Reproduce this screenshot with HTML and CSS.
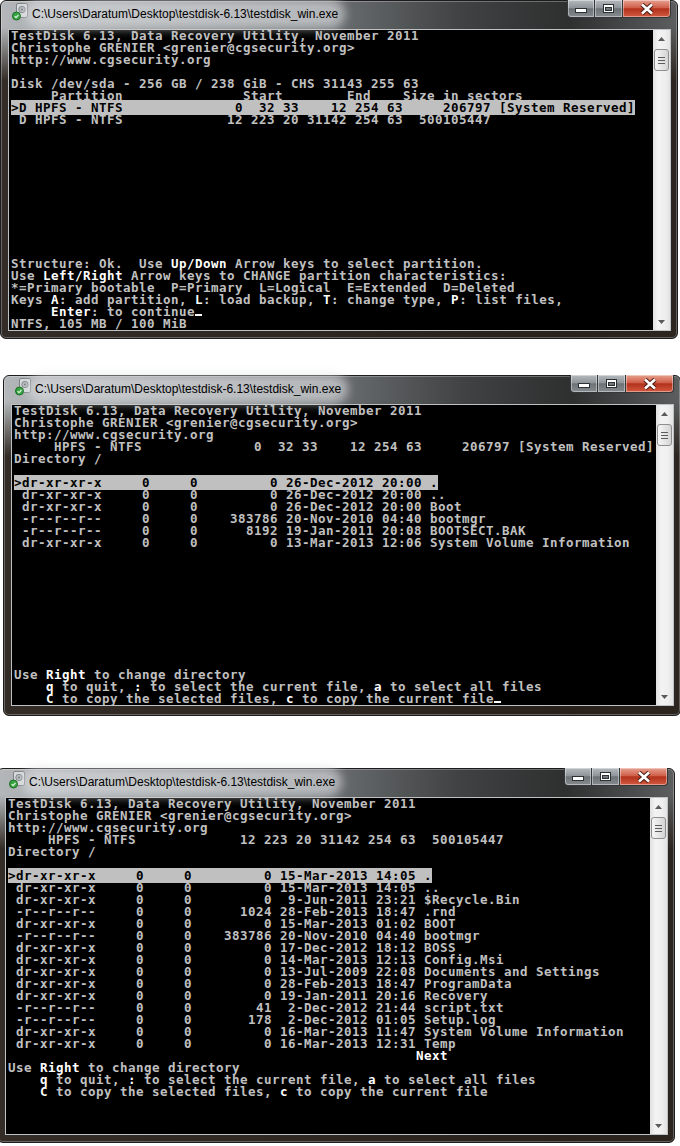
FILE: index.html
```html
<!DOCTYPE html>
<html>
<head>
<title>TestDisk screenshots</title>
<link rel="stylesheet" href="styles.css">
</head>
<body>

<!-- Window 1: partition list -->
<div class="window win-1">
    <div class="titlebar">
        <svg class="app-icon" viewBox="0 0 16 18" width="16" height="18">
            <rect x="4.5" y="0.5" width="11" height="14" rx="1.5" fill="#d6d9db" stroke="#7e8386"/>
            <circle cx="10" cy="6.5" r="3.2" fill="#b5babd" stroke="#80868a"/>
            <circle cx="10" cy="6.5" r="0.9" fill="#6b7073"/>
            <circle cx="4.5" cy="13" r="4" fill="#35a540" stroke="#1b6b25"/>
            <path d="M2.6 13.2 l1.4 1.4 l2.5 -2.7" fill="none" stroke="#e8f5e8" stroke-width="1.2"/>
        </svg>
        <span class="title">C:\Users\Daratum\Desktop\testdisk-6.13\testdisk_win.exe</span>
        <div class="caption">
            <div class="cap cap-min"><svg width="12" height="5"><rect x="0.5" y="0.5" width="11" height="4" fill="#fff" stroke="#2c3134"/></svg></div>
            <div class="cap cap-max"><svg width="11" height="9"><rect x="0.5" y="0.5" width="10" height="8" fill="none" stroke="#2c3134"/><rect x="1.5" y="1.5" width="8" height="6" fill="none" stroke="#fff"/><rect x="2" y="2" width="7" height="1.5" fill="#fff"/><rect x="2.5" y="3.5" width="6" height="3" fill="none" stroke="#2c3134"/></svg></div>
            <div class="cap cap-close"><svg width="16" height="12"><path d="M3 1.5 L13 10.5 M13 1.5 L3 10.5" stroke="#4a1d14" stroke-width="4.6"/><path d="M3 1.5 L13 10.5 M13 1.5 L3 10.5" stroke="#fff" stroke-width="2.6"/></svg></div>
        </div>
    </div>
    <div class="client">
<pre class="console">
TestDisk 6.13, Data Recovery Utility, November 2011
Christophe GRENIER &lt;grenier@cgsecurity.org&gt;
http://www.cgsecurity.org

Disk /dev/sda - 256 GB / 238 GiB - CHS 31143 255 63
     Partition               Start        End    Size in sectors
<span class="sel">&gt;D HPFS - NTFS              0  32 33    12 254 63     206797 [System Reserved]</span>
 D HPFS - NTFS             12 223 20 31142 254 63  500105447











Structure: Ok.  Use <b>Up/Down</b> Arrow keys to select partition.
Use <b>Left/Right</b> Arrow keys to CHANGE partition characteristics:
*=Primary bootable  P=Primary  L=Logical  E=Extended  D=Deleted
Keys <b>A</b>: add partition, <b>L</b>: load backup, <b>T</b>: change type, <b>P</b>: list files,
     <b>Enter</b>: to continue<span class="cursor"></span>
NTFS, 105 MB / 100 MiB</pre>
        <div class="scrollbar">
            <div class="sb-arrow"><svg width="7" height="4"><path d="M3.5 0 L7 4 L0 4 Z" fill="#5a5a5a"/></svg></div>
            <div class="sb-thumb"><i class="grip"></i><i class="grip"></i><i class="grip"></i></div>
            <div class="sb-track"></div>
            <div class="sb-arrow"><svg width="7" height="4"><path d="M0 0 L7 0 L3.5 4 Z" fill="#5a5a5a"/></svg></div>
        </div>
    </div>
</div>

<!-- Window 2: short directory listing -->
<div class="window win-2">
    <div class="titlebar">
        <svg class="app-icon" viewBox="0 0 16 18" width="16" height="18">
            <rect x="4.5" y="0.5" width="11" height="14" rx="1.5" fill="#d6d9db" stroke="#7e8386"/>
            <circle cx="10" cy="6.5" r="3.2" fill="#b5babd" stroke="#80868a"/>
            <circle cx="10" cy="6.5" r="0.9" fill="#6b7073"/>
            <circle cx="4.5" cy="13" r="4" fill="#35a540" stroke="#1b6b25"/>
            <path d="M2.6 13.2 l1.4 1.4 l2.5 -2.7" fill="none" stroke="#e8f5e8" stroke-width="1.2"/>
        </svg>
        <span class="title">C:\Users\Daratum\Desktop\testdisk-6.13\testdisk_win.exe</span>
        <div class="caption">
            <div class="cap cap-min"><svg width="12" height="5"><rect x="0.5" y="0.5" width="11" height="4" fill="#fff" stroke="#2c3134"/></svg></div>
            <div class="cap cap-max"><svg width="11" height="9"><rect x="0.5" y="0.5" width="10" height="8" fill="none" stroke="#2c3134"/><rect x="1.5" y="1.5" width="8" height="6" fill="none" stroke="#fff"/><rect x="2" y="2" width="7" height="1.5" fill="#fff"/><rect x="2.5" y="3.5" width="6" height="3" fill="none" stroke="#2c3134"/></svg></div>
            <div class="cap cap-close"><svg width="16" height="12"><path d="M3 1.5 L13 10.5 M13 1.5 L3 10.5" stroke="#4a1d14" stroke-width="4.6"/><path d="M3 1.5 L13 10.5 M13 1.5 L3 10.5" stroke="#fff" stroke-width="2.6"/></svg></div>
        </div>
    </div>
    <div class="client">
<pre class="console">
TestDisk 6.13, Data Recovery Utility, November 2011
Christophe GRENIER &lt;grenier@cgsecurity.org&gt;
http://www.cgsecurity.org
     HPFS - NTFS              0  32 33    12 254 63     206797 [System Reserved]
Directory /

<span class="sel">&gt;dr-xr-xr-x     0     0         0 26-Dec-2012 20:00 .</span>
 dr-xr-xr-x     0     0         0 26-Dec-2012 20:00 ..
 dr-xr-xr-x     0     0         0 26-Dec-2012 20:00 Boot
 -r--r--r--     0     0    383786 20-Nov-2010 04:40 bootmgr
 -r--r--r--     0     0      8192 19-Jan-2011 20:08 BOOTSECT.BAK
 dr-xr-xr-x     0     0         0 13-Mar-2013 12:06 System Volume Information










Use <b>Right</b> to change directory
    <b>q</b> to quit, <b>:</b> to select the current file, <b>a</b> to select all files
    <b>C</b> to copy the selected files, <b>c</b> to copy the current file<span class="cursor"></span></pre>
        <div class="scrollbar">
            <div class="sb-arrow"><svg width="7" height="4"><path d="M3.5 0 L7 4 L0 4 Z" fill="#5a5a5a"/></svg></div>
            <div class="sb-thumb"><i class="grip"></i><i class="grip"></i><i class="grip"></i></div>
            <div class="sb-track"></div>
            <div class="sb-arrow"><svg width="7" height="4"><path d="M0 0 L7 0 L3.5 4 Z" fill="#5a5a5a"/></svg></div>
        </div>
    </div>
</div>

<!-- Window 3: full directory listing -->
<div class="window win-3">
    <div class="titlebar">
        <svg class="app-icon" viewBox="0 0 16 18" width="16" height="18">
            <rect x="4.5" y="0.5" width="11" height="14" rx="1.5" fill="#d6d9db" stroke="#7e8386"/>
            <circle cx="10" cy="6.5" r="3.2" fill="#b5babd" stroke="#80868a"/>
            <circle cx="10" cy="6.5" r="0.9" fill="#6b7073"/>
            <circle cx="4.5" cy="13" r="4" fill="#35a540" stroke="#1b6b25"/>
            <path d="M2.6 13.2 l1.4 1.4 l2.5 -2.7" fill="none" stroke="#e8f5e8" stroke-width="1.2"/>
        </svg>
        <span class="title">C:\Users\Daratum\Desktop\testdisk-6.13\testdisk_win.exe</span>
        <div class="caption">
            <div class="cap cap-min"><svg width="12" height="5"><rect x="0.5" y="0.5" width="11" height="4" fill="#fff" stroke="#2c3134"/></svg></div>
            <div class="cap cap-max"><svg width="11" height="9"><rect x="0.5" y="0.5" width="10" height="8" fill="none" stroke="#2c3134"/><rect x="1.5" y="1.5" width="8" height="6" fill="none" stroke="#fff"/><rect x="2" y="2" width="7" height="1.5" fill="#fff"/><rect x="2.5" y="3.5" width="6" height="3" fill="none" stroke="#2c3134"/></svg></div>
            <div class="cap cap-close"><svg width="16" height="12"><path d="M3 1.5 L13 10.5 M13 1.5 L3 10.5" stroke="#4a1d14" stroke-width="4.6"/><path d="M3 1.5 L13 10.5 M13 1.5 L3 10.5" stroke="#fff" stroke-width="2.6"/></svg></div>
        </div>
    </div>
    <div class="client">
<pre class="console console-tall">
TestDisk 6.13, Data Recovery Utility, November 2011
Christophe GRENIER &lt;grenier@cgsecurity.org&gt;
http://www.cgsecurity.org
     HPFS - NTFS             12 223 20 31142 254 63  500105447
Directory /

<span class="sel">&gt;dr-xr-xr-x     0     0         0 15-Mar-2013 14:05 .</span>
 dr-xr-xr-x     0     0         0 15-Mar-2013 14:05 ..
 dr-xr-xr-x     0     0         0  9-Jun-2011 23:21 $Recycle.Bin
 -r--r--r--     0     0      1024 28-Feb-2013 18:47 .rnd
 dr-xr-xr-x     0     0         0 15-Mar-2013 01:02 BOOT
 -r--r--r--     0     0    383786 20-Nov-2010 04:40 bootmgr
 dr-xr-xr-x     0     0         0 17-Dec-2012 18:12 BOSS
 dr-xr-xr-x     0     0         0 14-Mar-2013 12:13 Config.Msi
 dr-xr-xr-x     0     0         0 13-Jul-2009 22:08 Documents and Settings
 dr-xr-xr-x     0     0         0 28-Feb-2013 18:47 ProgramData
 dr-xr-xr-x     0     0         0 19-Jan-2011 20:16 Recovery
 -r--r--r--     0     0        41  2-Dec-2012 21:44 script.txt
 -r--r--r--     0     0       178  2-Dec-2012 01:05 Setup.log
 dr-xr-xr-x     0     0         0 16-Mar-2013 11:47 System Volume Information
 dr-xr-xr-x     0     0         0 16-Mar-2013 12:31 Temp
                                                   <b>Next</b>
Use <b>Right</b> to change directory
    <b>q</b> to quit, <b>:</b> to select the current file, <b>a</b> to select all files
    <b>C</b> to copy the selected files, <b>c</b> to copy the current file</pre>
        <div class="scrollbar">
            <div class="sb-arrow"><svg width="7" height="4"><path d="M3.5 0 L7 4 L0 4 Z" fill="#5a5a5a"/></svg></div>
            <div class="sb-thumb"><i class="grip"></i><i class="grip"></i><i class="grip"></i></div>
            <div class="sb-track"></div>
            <div class="sb-arrow"><svg width="7" height="4"><path d="M0 0 L7 0 L3.5 4 Z" fill="#5a5a5a"/></svg></div>
        </div>
    </div>
</div>

</body>
</html>
```

FILE: styles.css
```css
html, body {
    margin: 0;
    padding: 0;
    background: #fff;
    overflow: hidden;
}
body {
    width: 680px;
    height: 1146px;
}

/* Aero glass frame */
.window {
    width: 678px;
    box-sizing: border-box;
    border: 1px solid #1c1c1c;
    border-radius: 6px;
    padding: 0 6px 7px 7px;
    background:
        linear-gradient(to bottom, rgba(40, 32, 26, 0) 26px, rgba(40, 32, 26, 0.92) 80px),
        linear-gradient(to right, #b3b7b9 0%, #a0a4a6 12%, #74787a 45%, #404243 68%, #2e2f2f 84%, #5c5e5f 100%);
    box-shadow: inset 0 0 0 1px rgba(255, 255, 255, 0.28);
}
.win-2 {
    margin: 36px 0 0 3px;
    padding-bottom: 9px;
}
.win-3 {
    margin: 52px 0 0 -3px;
}

.titlebar {
    display: flex;
    align-items: flex-start;
    height: 28px;
}
.app-icon {
    flex: none;
    margin: 2px 0 0 4px;
}
.title {
    margin: 5px 0 0 4px;
    font-family: "Liberation Sans", Arial, sans-serif;
    font-size: 12px;
    line-height: 16px;
    color: #000;
    white-space: nowrap;
    background: rgba(222, 225, 227, 0.62);
    box-shadow: 0 0 10px 7px rgba(222, 225, 227, 0.62);
    border-radius: 8px;
}

/* caption buttons */
.caption {
    display: flex;
    margin-left: auto;
    margin-top: -1px;
}
.cap {
    height: 18px;
    box-sizing: border-box;
    border: 1px solid #34383a;
    border-top: 0;
    display: flex;
    align-items: center;
    justify-content: center;
    background: linear-gradient(to bottom, #b5babe 0%, #8f959a 45%, #6c7276 52%, #858b8f 100%);
    box-shadow: inset 0 0 0 1px rgba(255, 255, 255, 0.4);
}
.cap-min {
    width: 28px;
    border-radius: 0 0 0 4px;
}
.cap-min svg {
    margin-top: 4px;
}
.cap-max {
    width: 28px;
    border-left: 0;
}
.cap-close {
    width: 48px;
    border-left: 0;
    border-radius: 0 0 4px 0;
    background: linear-gradient(to bottom, #e7a190 0%, #d0604a 45%, #b3311c 52%, #d25a3f 100%);
}

/* console client area */
.client {
    display: flex;
    border: 1px solid rgba(225, 228, 230, 0.85);
    background: #000;
}
.console {
    flex: none;
    width: 644px;
    height: 300px;
    box-sizing: border-box;
    margin: 0;
    padding: 0 2px;
    font-family: "DejaVu Sans Mono", monospace;
    font-size: 12.5px;
    font-weight: bold;
    line-height: 12px;
    letter-spacing: 0.475px;
    color: #c0c0c0;
    white-space: pre;
    overflow: hidden;
}
.console-tall {
    height: 336px;
}
.console b {
    color: #fff;
}
.sel {
    background: #c0c0c0;
    color: #000;
}
.cursor {
    display: inline-block;
    width: 7px;
    height: 2px;
    background: #fff;
    vertical-align: baseline;
}

/* scrollbar */
.scrollbar {
    flex: none;
    width: 17px;
    display: flex;
    flex-direction: column;
    background: linear-gradient(to right, #e0e0e0, #f3f3f3 30%, #efefef 70%, #e3e3e3);
}
.sb-arrow {
    height: 17px;
    display: flex;
    align-items: center;
    justify-content: center;
}
.sb-thumb {
    height: 20px;
    margin: 2px 1px 0;
    border: 1px solid #8e8e8e;
    border-radius: 3px;
    background: linear-gradient(to right, #f6f6f6, #e6e6e6 50%, #d4d4d4);
    display: flex;
    flex-direction: column;
    align-items: center;
    justify-content: center;
    gap: 2px;
}
.grip {
    display: block;
    width: 7px;
    height: 1px;
    background: #5c5c5c;
}
.sb-track {
    flex: 1;
}
```
